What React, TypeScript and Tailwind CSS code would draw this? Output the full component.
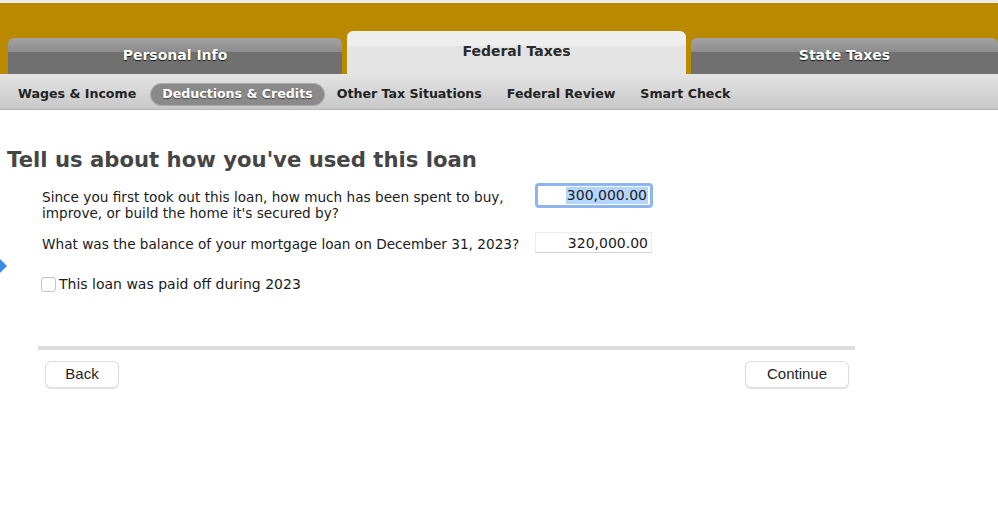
import React from 'react';

const subnav = [
  { label: 'Wages & Income', active: false },
  { label: 'Deductions & Credits', active: true },
  { label: 'Other Tax Situations', active: false },
  { label: 'Federal Review', active: false },
  { label: 'Smart Check', active: false },
];

function DarkTab({ label, className }: { label: string; className: string }) {
  return (
    <div
      className={`h-[36px] rounded-t-[6px] overflow-hidden flex flex-col relative ${className}`}
    >
      <div className="h-[14px] bg-gradient-to-b from-[#a3a3a3] to-[#8c8c8c]" />
      <div className="flex-1 bg-[#707070]" />
      <span className="absolute inset-0 flex items-center justify-center pb-[1px] text-white font-bold text-[14px] [text-shadow:0_1px_1px_rgba(0,0,0,0.8)]">
        {label}
      </span>
    </div>
  );
}

export default function App() {
  return (
    <div className="w-[998px] h-[505px] bg-white overflow-hidden relative font-['DejaVu_Sans',sans-serif] text-[#1a1a1a]">
      <div className="h-[3px] bg-[#ececec]" />
      <div className="h-[71px] bg-[#b98a00] flex items-end pl-[8px] gap-[5px]">
        <DarkTab label="Personal Info" className="w-[334px]" />
        <div className="w-[339px] h-[43px] rounded-t-[6px] overflow-hidden flex flex-col relative">
          <div className="h-[15px] bg-[#eeeeee]" />
          <div className="flex-1 bg-[#e4e4e4]" />
          <span className="absolute inset-0 flex items-center justify-center pb-[2px] text-[#2b2b2b] font-bold text-[14px]">
            Federal Taxes
          </span>
        </div>
        <DarkTab label="State Taxes" className="flex-1" />
      </div>
      <div className="h-[36px] bg-gradient-to-b from-[#e4e4e4] to-[#c8c8c8] flex items-center pt-[6px] pl-[18px] gap-[25px] border-b border-[#b5b5b5]">
        {subnav.map((s) => (
          <span
            key={s.label}
            className={
              s.active
                ? '-ml-[11px] -mr-[13px] px-[11px] h-[23px] flex items-center rounded-full bg-[#8a8a8a] border border-[#a9a9a9] text-white font-bold text-[12.6px] [text-shadow:0_1px_1px_rgba(0,0,0,0.5)]'
                : 'h-[23px] flex items-center text-[#222] font-bold text-[12.6px]'
            }
          >
            {s.label}
          </span>
        ))}
      </div>

      <div className="absolute left-0 top-[259px] w-0 h-0 border-y-[7px] border-y-transparent border-l-[7px] border-l-[#3a8be6]" />

      <h1 className="mt-[36px] ml-[7px] text-[21.2px] font-bold text-[#454545] leading-[28px]">
        Tell us about how you've used this loan
      </h1>

      <div className="ml-[42px] mt-[9px] w-[612px] text-[13.65px] leading-[16px]">
        <div className="flex items-start">
          <p className="w-[493px] pt-[6px]">
            Since you first took out this loan, how much has been spent to buy,
            improve, or build the home it's secured by?
          </p>
          <div className="w-[118px] h-[25px] rounded-[4px] border-[3px] border-[#8fb5f0] bg-white flex items-center justify-end pr-[2px]">
            <span className="bg-[#b4d5fe] text-[14px] leading-[17px] px-[1px]">300,000.00</span>
          </div>
        </div>
        <div className="flex items-center mt-[11px]">
          <p className="w-[493px] pt-[3px]">What was the balance of your mortgage loan on December 31, 2023?</p>
          <div className="w-[117px] h-[21px] bg-white border border-[#ececec] border-b-[#d5d5d5] flex items-center justify-end pr-[3px] text-[14px]">
            320,000.00
          </div>
        </div>
        <label className="flex items-center mt-[23px] -ml-[1px] text-[14px]">
          <span className="w-[15px] h-[15px] rounded-[3px] border border-[#c4c4c4] bg-white shadow-[inset_0_1px_1px_rgba(0,0,0,0.05)]" />
          <span className="ml-[3px]">This loan was paid off during 2023</span>
        </label>
      </div>

      <div className="ml-[38px] mt-[54px] w-[817px] h-[4px] bg-[#dcdcdc]" />

      <div className="ml-[45px] mt-[11px] w-[804px] flex justify-between font-['Liberation_Sans',sans-serif] text-[15px] text-[#222]">
        <button className="w-[74px] h-[27px] rounded-[6px] bg-white border border-[#dcdcdc] shadow-[0_1px_1px_rgba(0,0,0,0.12)]">
          Back
        </button>
        <button className="w-[104px] h-[27px] rounded-[6px] bg-white border border-[#dcdcdc] shadow-[0_1px_1px_rgba(0,0,0,0.12)]">
          Continue
        </button>
      </div>
    </div>
  );
}
